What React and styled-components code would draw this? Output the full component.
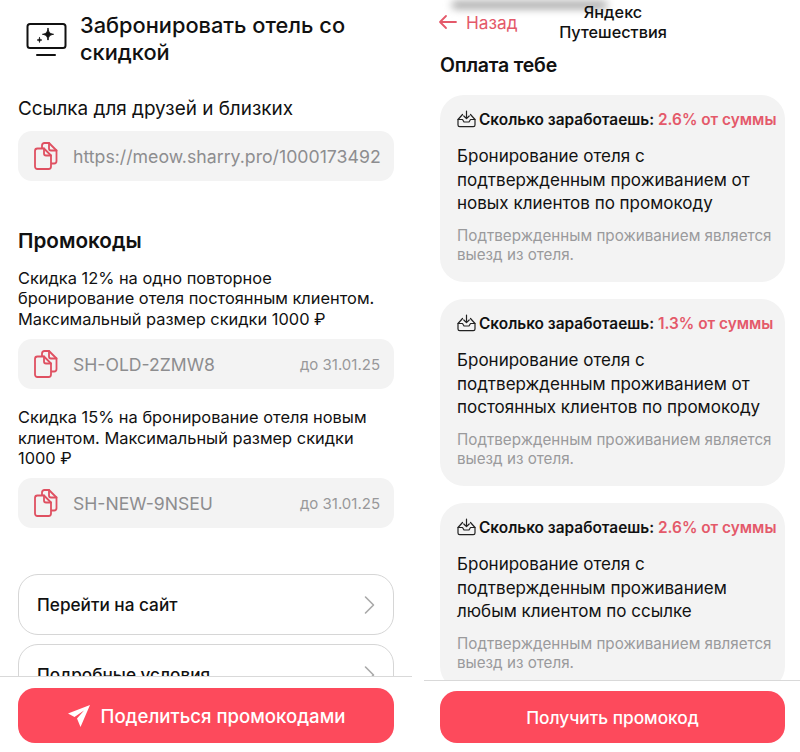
import React from 'react';
import styled, { createGlobalStyle } from 'styled-components';

const Global = createGlobalStyle`
  html, body { margin: 0; padding: 0; background: #fff; }
  body { font-family: Inter, "Noto Sans", sans-serif; color: #111; }
`;

const Page = styled.div`
  display: flex;
  justify-content: space-between;
  width: 800px;
  height: 752px;
  overflow: hidden;
`;

const Pane = styled.div`
  display: flex;
  flex-direction: column;
  width: ${p => p.$width}px;
  height: 752px;
  position: relative;
`;

const Scroll = styled.div`
  height: ${p => p.$height}px;
  overflow: hidden;
  padding: ${p => p.$pad};
  box-sizing: border-box;
  flex: none;
`;

const Footer = styled.div`
  border-top: 1px solid #d9d9d9;
  padding: ${p => p.$pad};
  flex: none;
`;

const MainButton = styled.div`
  height: ${p => p.$height}px;
  border-radius: 17px;
  background: #fd4a5c;
  color: #fff;
  font-size: ${p => p.$size}px;
  font-weight: 500;
  display: flex;
  align-items: center;
  justify-content: center;
  gap: 10px;
`;

const Header = styled.div`
  display: flex;
  gap: 13px;
  padding-left: 8px;
`;

const HeaderIcon = styled.svg`
  width: 41px;
  height: 34px;
  margin-top: 22px;
  flex: none;
`;

const Title = styled.h1`
  margin: 12px 0 0;
  font-size: 21.8px;
  line-height: 27px;
  font-weight: 500;
`;

const Label = styled.div`
  margin-top: 32px;
  font-size: 18.9px;
  line-height: 22px;
`;

const Field = styled.div`
  display: flex;
  align-items: center;
  height: 50px;
  margin-top: ${p => p.$top}px;
  padding: 0 14px 0 16px;
  box-sizing: border-box;
  border-radius: 14px;
  background: #f3f3f3;
  gap: 15px;
`;

const FieldText = styled.span`
  color: #8d8d8f;
  font-size: ${p => p.$size}px;
  white-space: nowrap;
  flex: 1;
`;

const FieldDate = styled.span`
  color: #98989a;
  font-size: 15px;
`;

const SectionTitle = styled.h2`
  margin: 47px 0 0;
  font-size: 20.7px;
  line-height: 26px;
  font-weight: 600;
`;

const Desc = styled.p`
  margin: ${p => p.$top}px 0 0;
  max-width: 372px;
  font-size: 16.4px;
  line-height: 20.4px;
`;

const LinkCard = styled.div`
  display: flex;
  align-items: center;
  justify-content: space-between;
  height: 61px;
  margin-top: ${p => p.$top}px;
  padding: 0 18px;
  box-sizing: border-box;
  border: 1px solid #d6d6d6;
  border-radius: 20px;
  font-size: 17.2px;
  font-weight: 500;
`;

const BlurBar = styled.div`
  position: absolute;
  left: 28px;
  top: 2px;
  width: 155px;
  height: 6px;
  border-radius: 3px;
  background: #8b8b8b;
  filter: blur(4px);
`;

const TopBar = styled.div`
  display: flex;
  height: 44px;
  padding-top: 2px;
  margin-left: -2px;
  position: relative;
`;

const Back = styled.div`
  display: flex;
  align-items: center;
  gap: 9px;
  width: 115px;
  height: 40px;
  color: #e4596a;
  font-size: 17.3px;
`;

const BarTitle = styled.div`
  width: 120px;
  text-align: center;
  font-size: 16.3px;
  line-height: 20px;
  font-weight: 500;
`;

const PayTitle = styled.h2`
  margin: 6px 0 0;
  font-size: 19.5px;
  line-height: 26px;
  font-weight: 600;
  letter-spacing: -0.2px;
`;

const PayCard = styled.div`
  margin-top: ${p => p.$top}px;
  width: 345px;
  height: 187px;
  padding: 14px 8px 0 17px;
  box-sizing: border-box;
  border-radius: 24px;
  background: #f3f3f3;
`;

const Earn = styled.div`
  display: flex;
  align-items: center;
  gap: 3px;
  height: 20px;
  font-size: 15.4px;
  font-weight: 600;
  white-space: nowrap;
`;

const Rate = styled.span`
  color: #e4596a;
`;

const CardBody = styled.p`
  margin: 16px 0 0;
  font-size: 17px;
  line-height: 23.5px;
`;

const CardNote = styled.p`
  margin: 10px 0 0;
  color: #9a9a9c;
  font-size: 15.2px;
  line-height: 19px;
`;

function CopyIcon() {
  return (
    <svg width="24" height="28" viewBox="0 0 24 28" fill="none" stroke="#df5061" strokeWidth="1.8" strokeLinejoin="round" strokeLinecap="round" style={{ flex: 'none' }}>
      <path d="M8 6V3.5C8 2.1 9 1 10.4 1H15l7.5 7.5V19c0 1.4-1 2.5-2.4 2.5H17" />
      <path d="M15 1v5.5c0 1.2.8 2 2 2h5.5" />
      <path d="M3.4 6.5H10l7 7V24.5c0 1.4-1 2.5-2.4 2.5H3.4C2 27 1 25.9 1 24.5V9c0-1.4 1-2.5 2.4-2.5Z" fill="#f3f3f3" />
      <path d="M10 6.5v5c0 1.2.8 2 2 2h5" />
    </svg>
  );
}

function Chevron() {
  return (
    <svg width="11" height="20" viewBox="0 0 11 20" fill="none" stroke="#a8a8a8" strokeWidth="1.6" strokeLinecap="round" strokeLinejoin="round">
      <path d="M1.5 2l8 8-8 8" />
    </svg>
  );
}

function InboxIcon() {
  return (
    <svg width="19" height="18" viewBox="0 0 19 18" fill="none" stroke="#222" strokeWidth="1.2" strokeLinecap="round" strokeLinejoin="round" style={{ flex: 'none' }}>
      <path d="M9.5 1v7.5M6.8 6l2.7 2.7L12.2 6" />
      <path d="M5.5 4.5 1 9.5v5.5c0 1 .7 1.7 1.7 1.7h13.6c1 0 1.7-.7 1.700-1.700V9.500l-4.500-5" />
      <path d="M1 9.500h4.500l1.500 2.500h5l1.500-2.500H18" />
    </svg>
  );
}

const payCards = [
  { rate: '2.6% от суммы', top: 17, text: ['Бронирование отеля с', 'подтвержденным проживанием от', 'новых клиентов по промокоду'] },
  { rate: '1.3% от суммы', top: 17, text: ['Бронирование отеля с', 'подтвержденным проживанием от', 'постоянных клиентов по промокоду'] },
  { rate: '2.6% от суммы', top: 17, text: ['Бронирование отеля с', 'подтвержденным проживанием', 'любым клиентом по ссылке'] },
];

export default function App() {
  return (
    <Page>
      <Global />
      <Pane $width={412}>
        <Scroll $height={676} $pad="0 18px">
          <Header>
            <HeaderIcon viewBox="0 0 41 34" fill="none" stroke="#111" strokeWidth="2" strokeLinecap="round" strokeLinejoin="round">
              <rect x="1.5" y="2" width="38" height="24" rx="2.5" />
              <path d="M11 33h18" />
              <path d="M22 6.5c.6 4 1.8 5.2 5.5 5.8-3.7.6-4.9 1.8-5.5 5.8-.6-4-1.8-5.2-5.5-5.8 3.7-.6 4.9-1.8 5.5-5.8Z" fill="#111" strokeWidth="1" />
              <path d="M13.5 15.5c.3 1.8.8 2.3 2.5 2.5-1.7.3-2.2.8-2.5 2.5-.3-1.7-.8-2.2-2.5-2.5 1.7-.2 2.2-.7 2.5-2.5Z" fill="#111" strokeWidth="0.6" />
            </HeaderIcon>
            <Title>Забронировать отель со скидкой</Title>
          </Header>
          <Label>Ссылка для друзей и близких</Label>
          <Field $top={11}>
            <CopyIcon />
            <FieldText $size={17.7}>https://meow.sharry.pro/1000173492</FieldText>
          </Field>
          <SectionTitle>Промокоды</SectionTitle>
          <Desc $top={14}>Скидка 12% на одно повторное бронирование отеля постоянным клиентом. Максимальный размер скидки 1000 ₽</Desc>
          <Field $top={10}>
            <CopyIcon />
            <FieldText $size={17.6}>SH-OLD-2ZMW8</FieldText>
            <FieldDate>до 31.01.25</FieldDate>
          </Field>
          <Desc $top={18}>Скидка 15% на бронирование отеля новым клиентом. Максимальный размер скидки 1000 ₽</Desc>
          <Field $top={10}>
            <CopyIcon />
            <FieldText $size={17.6}>SH-NEW-9NSEU</FieldText>
            <FieldDate>до 31.01.25</FieldDate>
          </Field>
          <LinkCard $top={46}>Перейти на сайт<Chevron /></LinkCard>
          <LinkCard $top={9}>Подробные условия<Chevron /></LinkCard>
        </Scroll>
        <Footer $pad="11px 18px 0">
          <MainButton $height={55} $size={18.6}>
            <svg width="24" height="24" viewBox="0 0 24 24" fill="#fff">
              <path d="M23 1 1 9.5l6.5 3.500L17 6.500 10 14.500 13.500 23Z" />
            </svg>
            Поделиться промокодами
          </MainButton>
        </Footer>
      </Pane>
      <Pane $width={376}>
        <BlurBar />
        <Scroll $height={680} $pad="0 15px 0 16px">
          <TopBar>
            <Back>
              <svg width="19" height="16" viewBox="0 0 19 16" fill="none" stroke="#e4596a" strokeWidth="1.8" strokeLinecap="round" strokeLinejoin="round">
                <path d="M18 8H2M8 2 2 8l6 6" />
              </svg>
              Назад
            </Back>
            <BarTitle>Яндекс Путешествия</BarTitle>
          </TopBar>
          <PayTitle>Оплата тебе</PayTitle>
          {payCards.map((card, i) => (
            <PayCard key={i} $top={card.top}>
              <Earn>
                <InboxIcon />
                <span>Сколько заработаешь: <Rate>{card.rate}</Rate></span>
              </Earn>
              <CardBody>{card.text.map(line => <div key={line}>{line}</div>)}</CardBody>
              <CardNote>Подтвержденным проживанием является выезд из отеля.</CardNote>
            </PayCard>
          ))}
        </Scroll>
        <Footer $pad="10px 15px 0 16px">
          <MainButton $height={52} $size={17.3}>Получить промокод</MainButton>
        </Footer>
      </Pane>
    </Page>
  );
}
